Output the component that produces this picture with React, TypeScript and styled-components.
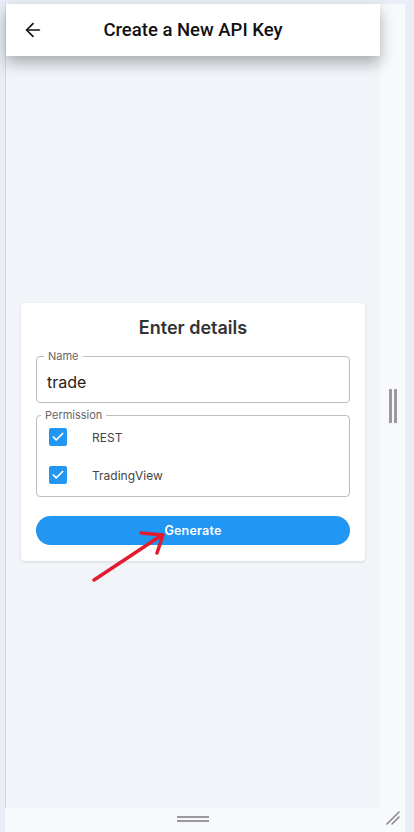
import React, { FC } from 'react';
import styled, { createGlobalStyle } from 'styled-components';
import { ArrowLeft, Check } from 'lucide-react';

const GlobalStyle = createGlobalStyle`
  html, body {
    margin: 0;
    padding: 0;
    background: #e9eef6;
    font-family: Inter, "Noto Sans", sans-serif;
  }
  * { box-sizing: border-box; }
`;

const Panel = styled.div`
  width: 400px;
  height: 828px;
  margin: 4px 0 0 5px;
  background: #f7f9fd;
  display: flex;
  flex-direction: column;
`;

const Top = styled.div`
  display: flex;
  height: 804px;
`;

const Frame = styled.div`
  position: relative;
  width: 375px;
  height: 100%;
  background: #f1f4f9;
  border-left: 1px solid #d4d8de;
  display: flex;
  flex-direction: column;
`;

const Header = styled.div`
  height: 52px;
  background: #fff;
  display: flex;
  align-items: center;
  padding-left: 15px;
  box-shadow: 0 7px 14px rgba(0, 0, 0, 0.3);
  position: relative;
  z-index: 1;
`;

const BackButton = styled.div`
  width: 24px;
  height: 24px;
  display: flex;
  align-items: center;
  justify-content: center;
  color: #111;
`;

const Title = styled.h1`
  flex: 1;
  margin: 0;
  padding-right: 39px;
  text-align: center;
  font-family: Roboto, "Liberation Sans", sans-serif;
  font-size: 18.5px;
  font-weight: 500;
  color: #111;
`;

const Body = styled.div`
  flex: 1;
  display: flex;
  align-items: center;
  padding: 0 15px;
`;

const Card = styled.div`
  width: 100%;
  background: #fff;
  border-radius: 4px;
  box-shadow: 0 1px 3px rgba(0, 0, 0, 0.12);
  padding: 13px 15px 16px;
  display: flex;
  flex-direction: column;
`;

const CardTitle = styled.h2`
  margin: 0 0 10px;
  text-align: center;
  font-size: 18px;
  line-height: 24px;
  font-weight: 600;
  color: #333;
`;

const Field = styled.fieldset<{ $h: number }>`
  margin: 0;
  padding: 0 10px;
  height: ${p => p.$h}px;
  border: 1px solid #bdbdbd;
  border-radius: 4px;
  min-width: 0;
`;

const Legend = styled.legend<{ $indent: number }>`
  margin-left: ${p => p.$indent - 14}px;
  padding: 0 4px;
  font-size: 11px;
  line-height: 12px;
  color: #666;
`;

const Value = styled.div`
  font-size: 16px;
  line-height: 22px;
  color: #222;
  margin-top: 9px;
`;

const Perms = styled.div`
  display: flex;
  flex-direction: column;
  gap: 20px;
  padding: 7px 0 0 2px;
`;

const PermRow = styled.label`
  display: flex;
  align-items: center;
  gap: 25px;
  font-size: 12px;
  color: #444;
  height: 18px;
`;

const Box = styled.span`
  width: 18px;
  height: 18px;
  border-radius: 2px;
  background: #2196f3;
  display: flex;
  align-items: center;
  justify-content: center;
  color: #fff;
`;

const Spacer = styled.div`
  height: 6px;
`;

const Button = styled.button`
  margin-top: 19px;
  height: 29px;
  border: none;
  border-radius: 15px;
  background: #2196f3;
  color: #fff;
  font-family: Inter, "Noto Sans", sans-serif;
  font-size: 12.5px;
  font-weight: 600;
  letter-spacing: 0.2px;
`;

const Pointer = styled.svg`
  position: absolute;
  left: 0;
  top: 0;
  pointer-events: none;
`;

const Side = styled.div`
  flex: 1;
  display: flex;
  align-items: center;
  justify-content: center;
`;

const VGrip = styled.div`
  width: 8px;
  height: 34px;
  border-left: 3px solid #9a9a9a;
  border-right: 3px solid #9a9a9a;
`;

const Bottom = styled.div`
  flex: 1;
  display: flex;
`;

const BottomMid = styled.div`
  width: 375px;
  display: flex;
  align-items: center;
  justify-content: center;
`;

const HGrip = styled.div`
  width: 32px;
  height: 6px;
  margin-top: -2px;
  border-top: 2px solid #9a9a9a;
  border-bottom: 2px solid #9a9a9a;
`;

const Corner = styled.div`
  flex: 1;
  display: flex;
  align-items: center;
  justify-content: center;
  padding-bottom: 4px;
`;

const App: FC = () => {
  return (
    <>
      <GlobalStyle />
      <Panel>
        <Top>
          <Frame>
            <Header>
              <BackButton>
                <ArrowLeft size={22} strokeWidth={1.8} />
              </BackButton>
              <Title>Create a New API Key</Title>
            </Header>
            <Body>
              <Card>
                <CardTitle>Enter details</CardTitle>
                <Field $h={53}>
                  <Legend $indent={11}>Name</Legend>
                  <Value>trade</Value>
                </Field>
                <Spacer />
                <Field $h={88}>
                  <Legend $indent={8}>Permission</Legend>
                  <Perms>
                    <PermRow>
                      <Box><Check size={14} strokeWidth={3} /></Box>
                      REST
                    </PermRow>
                    <PermRow>
                      <Box><Check size={14} strokeWidth={3} /></Box>
                      TradingView
                    </PermRow>
                  </Perms>
                </Field>
                <Button>Generate</Button>
              </Card>
            </Body>
            <Pointer width="375" height="804" viewBox="0 0 375 804">
              <g stroke="#e11b30" strokeWidth="3.5" strokeLinecap="round" fill="none">
                <line x1="88" y1="576" x2="156" y2="531" />
                <polyline points="135,529 157,531 151,549" strokeLinejoin="round" />
              </g>
            </Pointer>
          </Frame>
          <Side>
            <VGrip />
          </Side>
        </Top>
        <Bottom>
          <BottomMid>
            <HGrip />
          </BottomMid>
          <Corner>
            <svg width="14" height="14" viewBox="0 0 14 14">
              <g stroke="#8a8a8a" strokeWidth="1.6" strokeLinecap="round">
                <line x1="1" y1="13" x2="13" y2="1" />
                <line x1="6" y1="13" x2="13" y2="6" />
              </g>
            </svg>
          </Corner>
        </Bottom>
      </Panel>
    </>
  );
};

export default App;
